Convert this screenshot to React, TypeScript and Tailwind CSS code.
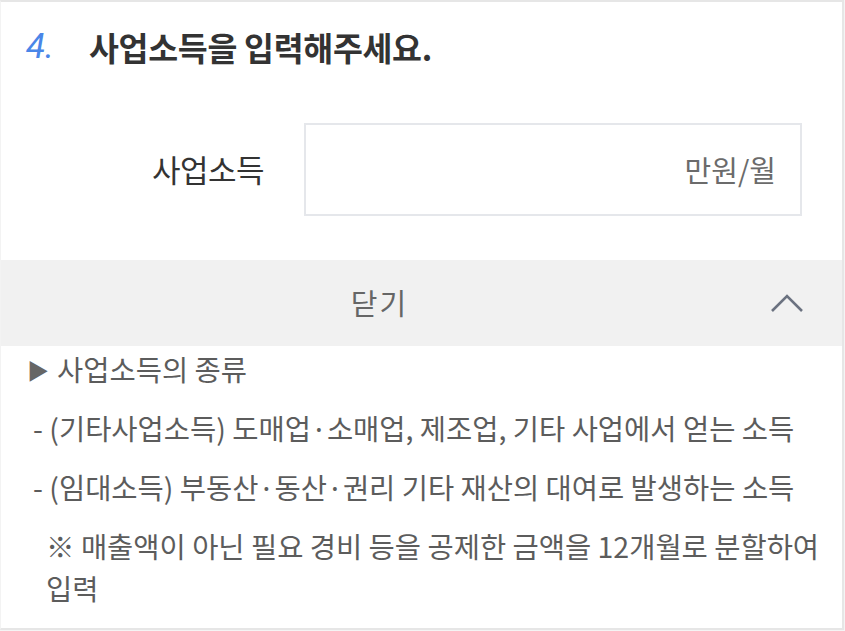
import React from 'react';

const font = { fontFamily: '"Noto Sans CJK KR", "Noto Sans", sans-serif' };

export default function App() {
  return (
    <div className="w-[845px] h-[631px] bg-[#f4f4f4] overflow-hidden" style={font}>
      <div className="w-[844px] bg-white border-t-2 border-r-2 border-l border-b-2 border-[#e6e6e6] border-l-[#f3f3f3]">
        <div className="flex items-center pt-[23px] h-[67px] leading-[40px]">
          <span className="ml-[25px] w-[63px] text-[35px] italic text-[#4a86e8]" style={{ fontFamily: 'Roboto, "Liberation Sans", sans-serif' }}>4.</span>
          <h1 className="text-[32.5px] font-bold text-[#333] tracking-[-0.3px]">사업소득을 입력해주세요.</h1>
        </div>

        <div className="mt-[54px] flex items-center">
          <label className="w-[303px] pr-[40px] text-right text-[31px] text-[#333] tracking-[-0.5px]">사업소득</label>
          <div className="w-[498px] h-[93px] border-2 border-[#e5e7eb] flex items-center justify-end pr-[24px]">
            <span className="text-[29px] text-[#6b6b6b]">만원/월</span>
          </div>
        </div>

        <div className="mt-[44px] h-[86px] bg-[#f1f1f1] flex items-center">
          <div className="w-[757px] text-center text-[29px] text-[#666] tracking-[2px]">닫기</div>
          <svg className="ml-[13px]" width="32" height="20" viewBox="0 0 32 20" fill="none">
            <polyline points="1,18 16,3 31,18" stroke="#6b7280" strokeWidth="2.6" />
          </svg>
        </div>

        <div className="pt-[2px] pb-[19px] text-[28.5px] leading-[42px] text-[#5c5c5c] flex flex-col gap-[17px]">
          <div className="pl-[26px] flex items-center">
            <span className="text-[#666] text-[22px] mr-[8px]">▶</span>
            <span>사업소득의 종류</span>
          </div>
          <div className="pl-[32px] whitespace-nowrap">- (기타사업소득) 도매업·소매업, 제조업, 기타 사업에서 얻는 소득</div>
          <div className="pl-[32px] whitespace-nowrap">- (임대소득) 부동산·동산·권리 기타 재산의 대여로 발생하는 소득</div>
          <div className="pl-[45px] pr-[14px]">※ 매출액이 아닌 필요 경비 등을 공제한 금액을 12개월로 분할하여 입력</div>
        </div>
      </div>
    </div>
  );
}
